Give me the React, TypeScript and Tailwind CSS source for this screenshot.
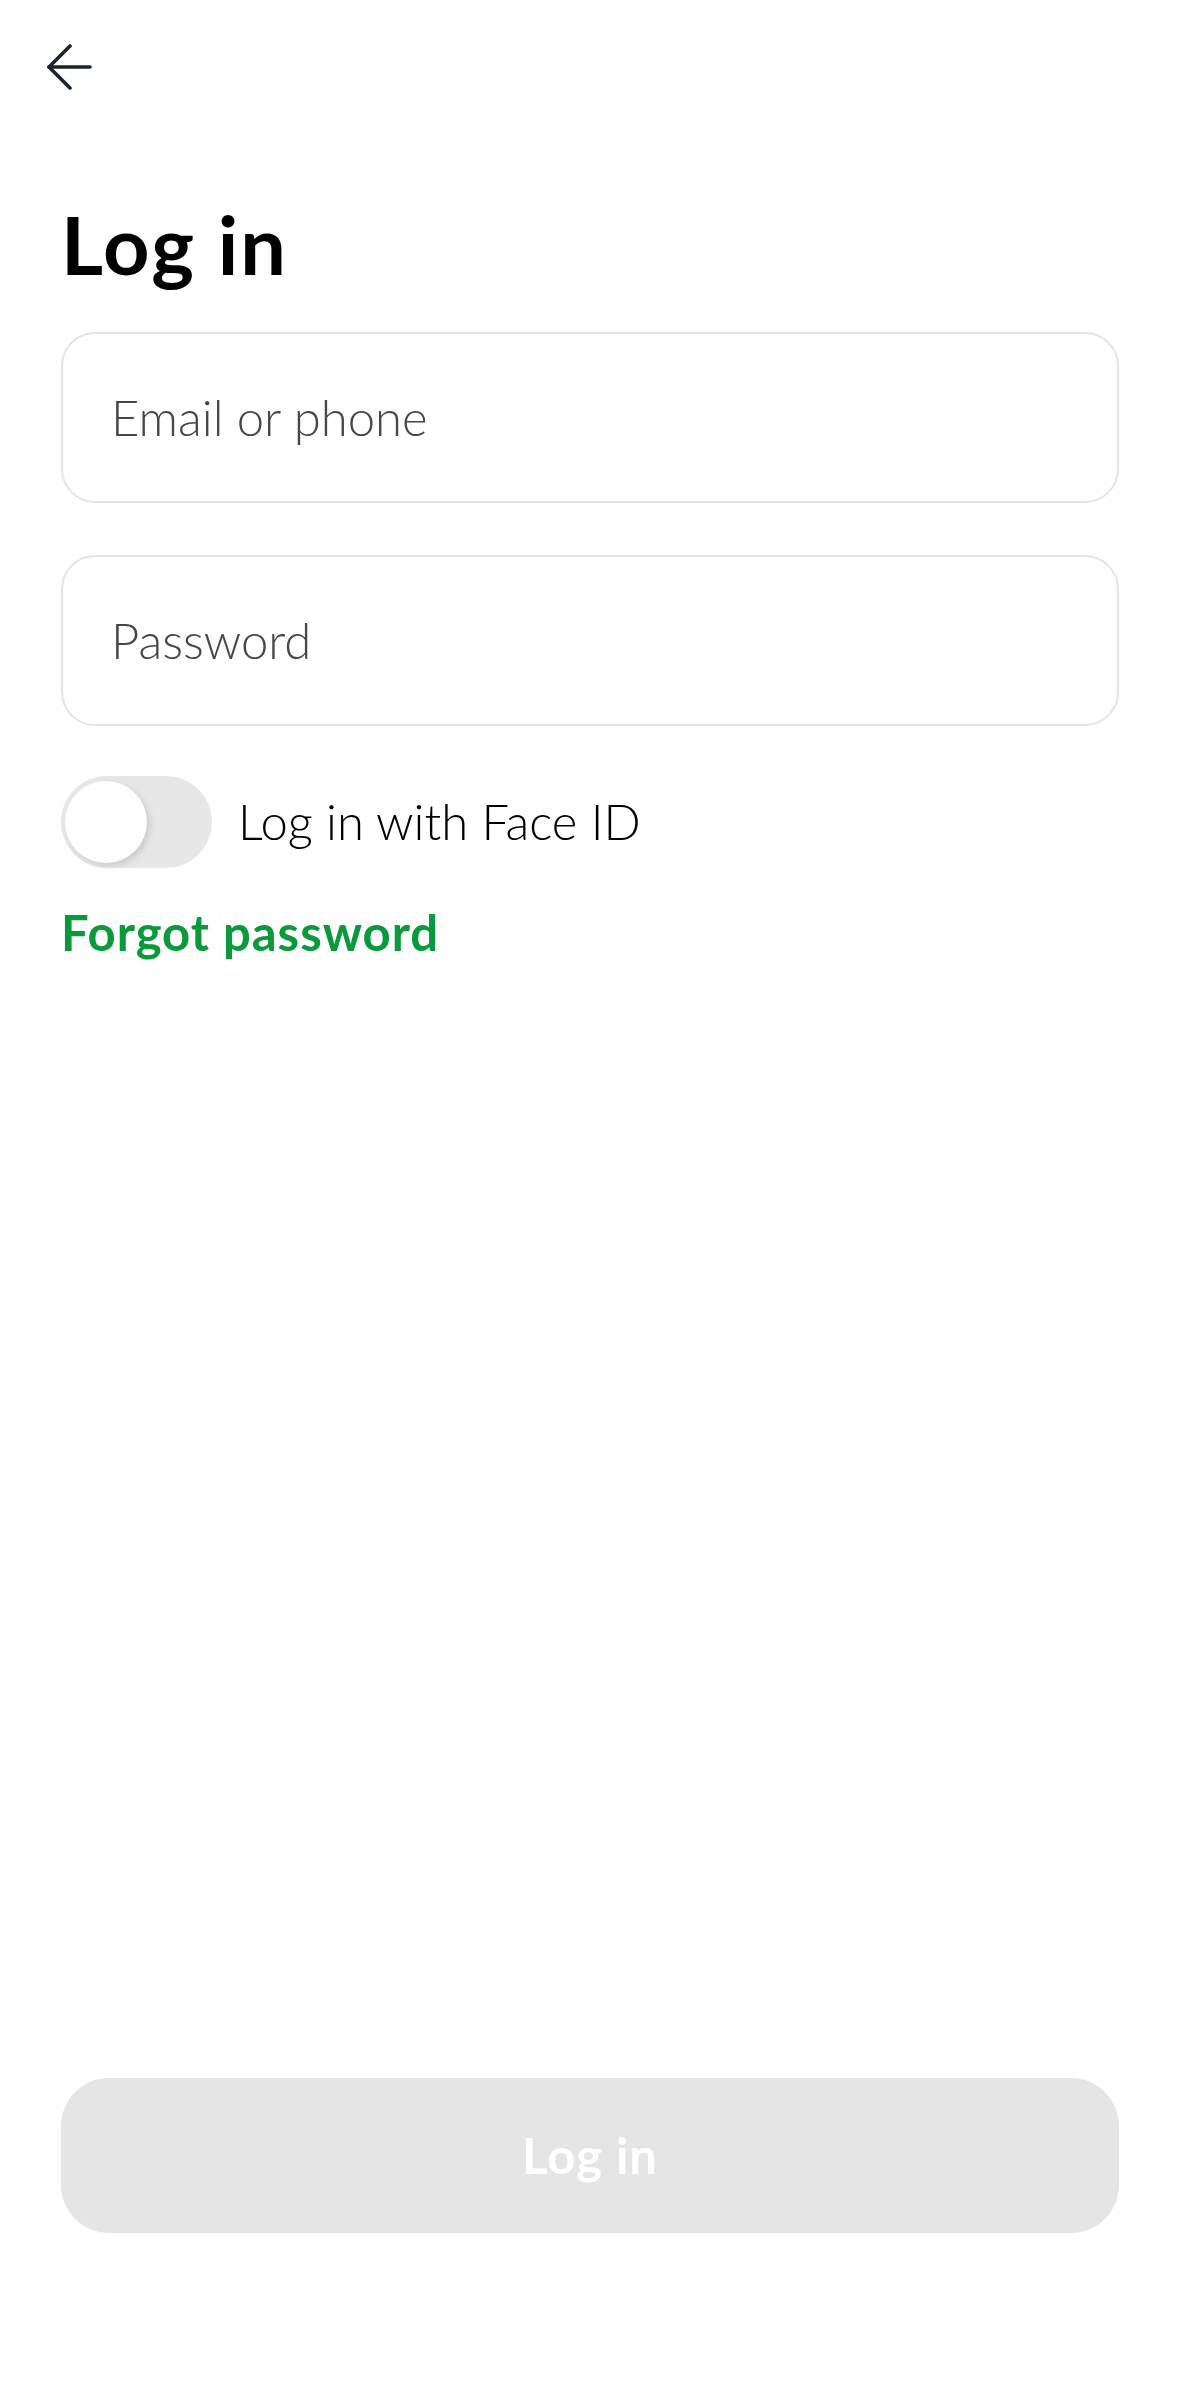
export default function App() {
  return (
    <div className="flex h-[2396px] w-full flex-col bg-white pr-[60px] pl-[61px] font-['Lato',sans-serif]">
      <div className="-ml-[15px] pt-[44px]">
        <svg width="46" height="46" viewBox="0 0 46 46" fill="none" stroke="#1b2330" strokeWidth="3.6" strokeLinecap="round" strokeLinejoin="round">
          <path d="M44 23H3" />
          <path d="M24 2L3 23L24 44" />
        </svg>
      </div>

      <h1 className="mt-[113px] text-[81px] leading-none font-bold tracking-[2px] text-black">Log in</h1>

      <div className="mt-[48px] flex h-[171px] items-center rounded-[34px] border-2 border-[#e4e4e4] px-[48px]">
        <span className="text-[49px] font-light text-[#474747]">Email or phone</span>
      </div>

      <div className="mt-[52px] flex h-[171px] items-center rounded-[34px] border-2 border-[#e4e4e4] px-[48px]">
        <span className="text-[49px] font-light text-[#474747]">Password</span>
      </div>

      <div className="mt-[50px] flex items-center gap-[26px]">
        <div className="flex h-[92px] w-[151px] items-center rounded-full bg-[#e7e7e7] px-[4px]">
          <div className="h-[82px] w-[82px] rounded-full bg-white shadow-[3px_3px_6px_rgba(0,0,0,0.12)]" />
        </div>
        <span className="text-[49px] font-light text-black">Log in with Face ID</span>
      </div>

      <div className="mt-[35px] text-[49px] leading-[58px] font-bold tracking-[1px] text-[#0b9a3b]">Forgot password</div>

      <div className="flex-1" />

      <button className="mb-[163px] flex h-[155px] w-full items-center justify-center rounded-[48px] bg-[#e5e5e5] text-[49px] font-bold tracking-[1px] text-white">
        Log in
      </button>
    </div>
  );
}
